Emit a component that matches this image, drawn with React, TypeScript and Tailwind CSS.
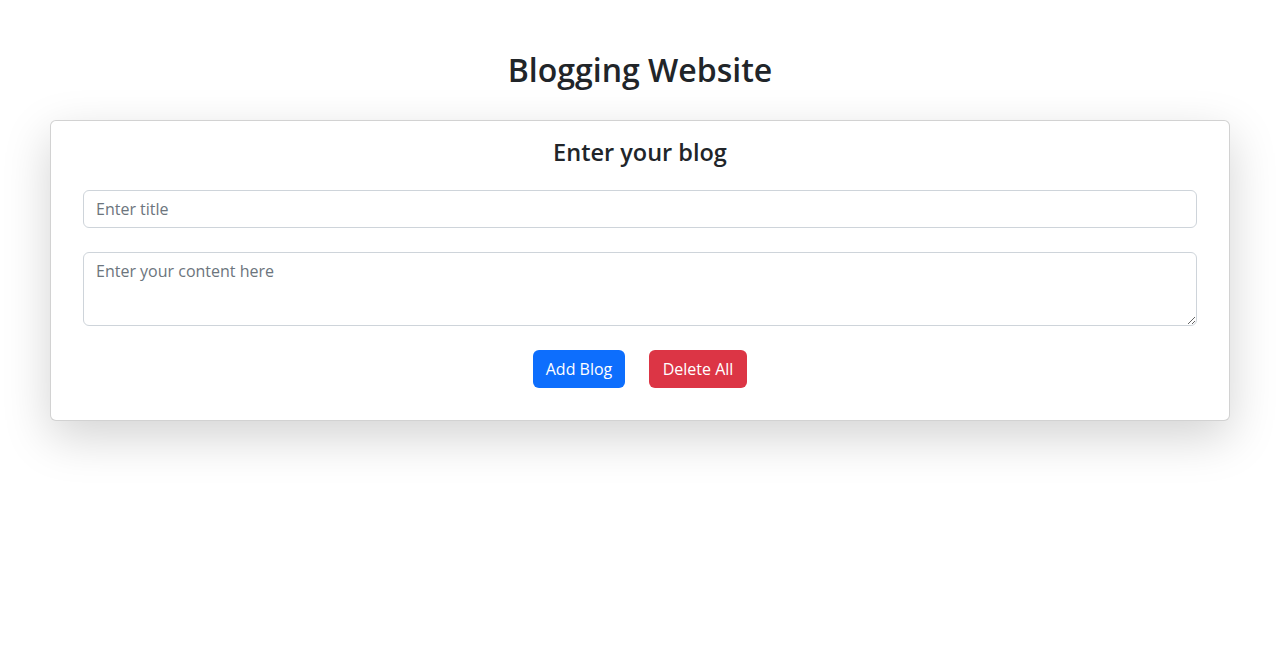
import React from 'react';

const App: React.FC = () => {
  return (
    <div className="min-h-[670px] bg-white text-[#212529] font-['Open_Sans',sans-serif]">
      <div className="px-[50px] pt-[51px]">
        <h1 className="text-center text-[32px] font-semibold leading-[38px] mb-[31px]">Blogging Website</h1>

        <div className="bg-white border border-black/[0.175] rounded-[6px] shadow-[0_16px_48px_rgba(0,0,0,0.175)] px-[32px] pt-[17px] pb-[32px]">
          <h3 className="text-center text-[23.5px] font-semibold leading-[29px] mb-[23px]">Enter your blog</h3>

          <form className="flex flex-col" onSubmit={(e) => e.preventDefault()}>
            <input
              type="text"
              placeholder="Enter title"
              className="h-[38px] w-full px-3 text-base border border-[#ced4da] rounded-[6px] placeholder:text-[#6c757d] outline-none mb-[24px]"
            />
            <textarea
              placeholder="Enter your content here"
              className="h-[74px] w-full px-3 py-[6px] text-base leading-6 border border-[#ced4da] rounded-[6px] placeholder:text-[#6c757d] outline-none mb-[24px] resize-y"
            />
            <div className="flex justify-center gap-6">
              <button type="submit" className="h-[38px] w-[92px] bg-[#0d6efd] text-white text-base rounded-[6px]">
                Add Blog
              </button>
              <button type="button" className="h-[38px] w-[98px] bg-[#dc3545] text-white text-base rounded-[6px]">
                Delete All
              </button>
            </div>
          </form>
        </div>
      </div>
    </div>
  );
};

export default App;
